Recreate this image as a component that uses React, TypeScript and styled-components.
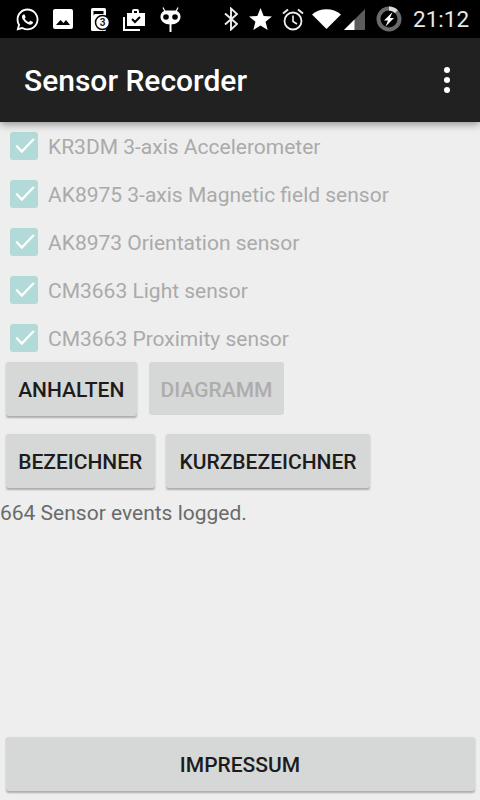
import React from "react";
import styled, { createGlobalStyle } from "styled-components";
import { FaWhatsapp } from "react-icons/fa";

const sensors = [
  "KR3DM 3-axis Accelerometer",
  "AK8975 3-axis Magnetic field sensor",
  "AK8973 Orientation sensor",
  "CM3663 Light sensor",
  "CM3663 Proximity sensor",
];

const GlobalStyle = createGlobalStyle`
  html, body {
    margin: 0;
    padding: 0;
    background: #eeeeee;
    font-family: Roboto, "Liberation Sans", sans-serif;
  }
`;

const Screen = styled.div`
  width: 480px;
  height: 800px;
  overflow: hidden;
  display: flex;
  flex-direction: column;
  background: #eeeeee;
`;

const StatusBar = styled.div`
  height: 38px;
  flex: none;
  background: #000;
  display: flex;
  align-items: center;
  color: #fff;
  padding-left: 16px;
`;

const Slot = styled.span<{ $w: number; $after: number }>`
  display: flex;
  align-items: center;
  justify-content: center;
  flex: none;
  width: ${(p) => p.$w}px;
  margin-right: ${(p) => p.$after}px;
`;

const Clock = styled.span`
  font-size: 22.5px;
  color: #e8e8e8;
  margin-left: 1px;
`;

const Toolbar = styled.header`
  height: 84px;
  flex: none;
  background: #212121;
  display: flex;
  align-items: center;
  justify-content: space-between;
  padding: 0 30px 0 24px;
  box-shadow: 0 2px 8px rgba(0, 0, 0, 0.42);
  position: relative;
  z-index: 1;
`;

const Title = styled.h1`
  margin: 0;
  font-size: 30px;
  font-weight: 500;
  color: #fff;
`;

const Dots = styled.div`
  display: flex;
  flex-direction: column;
  gap: 4px;
  span {
    width: 6px;
    height: 6px;
    border-radius: 50%;
    background: #fff;
  }
`;

const SensorList = styled.div`
  display: flex;
  flex-direction: column;
`;

const SensorRow = styled.label`
  height: 48px;
  display: flex;
  align-items: center;
  padding-left: 10px;
  font-size: 21px;
  color: #aaaaaa;
`;

const SensorName = styled.span`
  padding-top: 2px;
`;

const Box = styled.span`
  width: 28px;
  height: 28px;
  border-radius: 3px;
  background: #b2dad8;
  margin-right: 10px;
  display: flex;
  align-items: center;
  justify-content: center;
`;

const ButtonRow = styled.div<{ $gap: number; $after: number }>`
  display: flex;
  gap: ${(p) => p.$gap}px;
  padding-left: 5.5px;
  margin-bottom: ${(p) => p.$after}px;
`;

const Button = styled.button<{ $w: number }>`
  width: ${(p) => p.$w}px;
  height: 54px;
  padding: 2px 0 0;
  border: none;
  border-radius: 3px;
  background: #d6d7d7;
  color: #1c1c1c;
  font-family: inherit;
  font-size: 21px;
  font-weight: 500;
  box-shadow: 0 1.5px 2px rgba(0, 0, 0, 0.28);

  &:disabled {
    height: 53px;
    color: #adadad;
    box-shadow: none;
  }
`;

const Log = styled.p`
  margin: 0;
  font-size: 21px;
  line-height: 28px;
  color: #6a6a6a;
`;

const Footer = styled.div`
  margin-top: auto;
  padding: 0 5.5px 9px;
`;

function GalleryIcon() {
  return (
    <svg width="20" height="20" viewBox="0 0 20 20">
      <rect width="20" height="20" rx="2" fill="#fff" />
      <path d="M3 16l4.500-5 3 3 2.500-3 4 5z" fill="#000" />
    </svg>
  );
}

function SimIcon() {
  return (
    <svg width="20" height="25" viewBox="0 0 20 25">
      <rect x="1" y="1" width="15" height="23" rx="1.500" fill="#fff" />
      <path d="M3.500 4h10v3h-8a2 2 0 0 0-2 2z" fill="#000" />
      <circle cx="12.500" cy="15.500" r="7" fill="#fff" stroke="#000" strokeWidth="1.500" />
      <text x="12.500" y="19" fontSize="10" fontWeight="700" textAnchor="middle" fill="#222" fontFamily="Roboto, sans-serif">3</text>
    </svg>
  );
}

function BriefcaseIcon() {
  return (
    <svg width="23" height="23" viewBox="0 0 23 23">
      <path d="M1 9v13h16" fill="none" stroke="#fff" strokeWidth="2" />
      <path d="M4 5h5V3a2 2 0 0 1 2-2h3a2 2 0 0 1 2 2v2h6v13H4z" fill="#fff" />
      <rect x="11" y="3" width="3" height="2" fill="#000" />
      <path d="M9 11l3 3 5-5" fill="none" stroke="#000" strokeWidth="2" />
    </svg>
  );
}

function CidIcon() {
  return (
    <svg width="21" height="25" viewBox="0 0 21 25">
      <path d="M3 0.500l2 4M18 0.500l-2 4" stroke="#fff" strokeWidth="1.200" />
      <path d="M7 3.500h7c4 0 6.500 2.500 6.500 6.500s-4 7.500-10 7.500S0.500 14 0.500 10 3 3.500 7 3.500z" fill="#fff" />
      <circle cx="6" cy="10" r="2.800" fill="#000" />
      <circle cx="15" cy="10" r="2.800" fill="#000" />
      <path d="M10.500 17v8" stroke="#fff" strokeWidth="2" />
    </svg>
  );
}

function BluetoothIcon() {
  return (
    <svg width="14" height="24" viewBox="0 0 14 24">
      <path d="M1 6.500l12 10.500-6 5.500V1.500l6 5.500L1 17.500" fill="none" stroke="#eee" strokeWidth="1.900" />
    </svg>
  );
}

function StarIcon() {
  return (
    <svg width="23" height="22" viewBox="0 0 24 23">
      <path d="M12 0l3.300 8.300 8.700.5-6.700 5.700 2.200 8.500L12 18.200 4.500 22.900l2.200-8.500L0 8.800l8.700-.5z" fill="#fff" />
    </svg>
  );
}

function AlarmIcon() {
  return (
    <svg width="22" height="23" viewBox="0 0 22 23">
      <circle cx="11" cy="13" r="8.500" fill="none" stroke="#eee" strokeWidth="1.800" />
      <path d="M11 7.500V13.500l4 2.500" fill="none" stroke="#eee" strokeWidth="1.600" />
      <path d="M1 5.500L6 1.500M21 5.500L16 1.500" stroke="#eee" strokeWidth="2" />
    </svg>
  );
}

function WifiIcon() {
  return (
    <svg width="29" height="20" viewBox="0 0 29 20">
      <path d="M0 5.500C8-1.500 21-1.500 29 5.500L14.500 20z" fill="#fff" />
    </svg>
  );
}

function SignalIcon() {
  return (
    <svg width="21" height="21" viewBox="0 0 21 21">
      <path d="M0 21L21 0v21z" fill="#5c5c5c" />
      <path d="M0 21L10.500 10.500V21z" fill="#fff" />
    </svg>
  );
}

function BatteryIcon() {
  return (
    <svg width="26" height="26" viewBox="0 0 26 26">
      <circle cx="13" cy="13" r="10.500" fill="none" stroke="#6a6a6a" strokeWidth="4" />
      <path d="M13 2.500A10.500 10.500 0 0 1 20.400 5.600" fill="none" stroke="#ddd" strokeWidth="4" />
      <path d="M16.500 6L8 14.500h4L9.500 20.500 18 12h-4z" fill="#fff" />
    </svg>
  );
}

function Check() {
  return (
    <svg width="22" height="18" viewBox="0 0 22 18">
      <path d="M3.200 8.500L8.800 14.500 20.800 2" fill="none" stroke="#fff" strokeWidth="2.400" />
    </svg>
  );
}

export default function App() {
  return (
    <Screen>
      <GlobalStyle />
      <StatusBar>
        <Slot $w={23} $after={14}><FaWhatsapp size={25} /></Slot>
        <Slot $w={20} $after={17}><GalleryIcon /></Slot>
        <Slot $w={20} $after={13}><SimIcon /></Slot>
        <Slot $w={23} $after={14}><BriefcaseIcon /></Slot>
        <Slot $w={21} $after={43}><CidIcon /></Slot>
        <Slot $w={14} $after={11}><BluetoothIcon /></Slot>
        <Slot $w={23} $after={10}><StarIcon /></Slot>
        <Slot $w={22} $after={8}><AlarmIcon /></Slot>
        <Slot $w={29} $after={3}><WifiIcon /></Slot>
        <Slot $w={21} $after={11}><SignalIcon /></Slot>
        <Slot $w={26} $after={10}><BatteryIcon /></Slot>
        <Clock>21:12</Clock>
      </StatusBar>
      <Toolbar>
        <Title>Sensor Recorder</Title>
        <Dots><span /><span /><span /></Dots>
      </Toolbar>
      <SensorList>
        {sensors.map((name) => (
          <SensorRow key={name}>
            <Box><Check /></Box>
            <SensorName>{name}</SensorName>
          </SensorRow>
        ))}
      </SensorList>
      <ButtonRow $gap={12} $after={17.5}>
        <Button $w={131.5}>ANHALTEN</Button>
        <Button $w={135} disabled>DIAGRAMM</Button>
      </ButtonRow>
      <ButtonRow $gap={11} $after={11.5}>
        <Button $w={149.5}>BEZEICHNER</Button>
        <Button $w={204}>KURZBEZEICHNER</Button>
      </ButtonRow>
      <Log>664 Sensor events logged.</Log>
      <Footer>
        <Button $w={469}>IMPRESSUM</Button>
      </Footer>
    </Screen>
  );
}
